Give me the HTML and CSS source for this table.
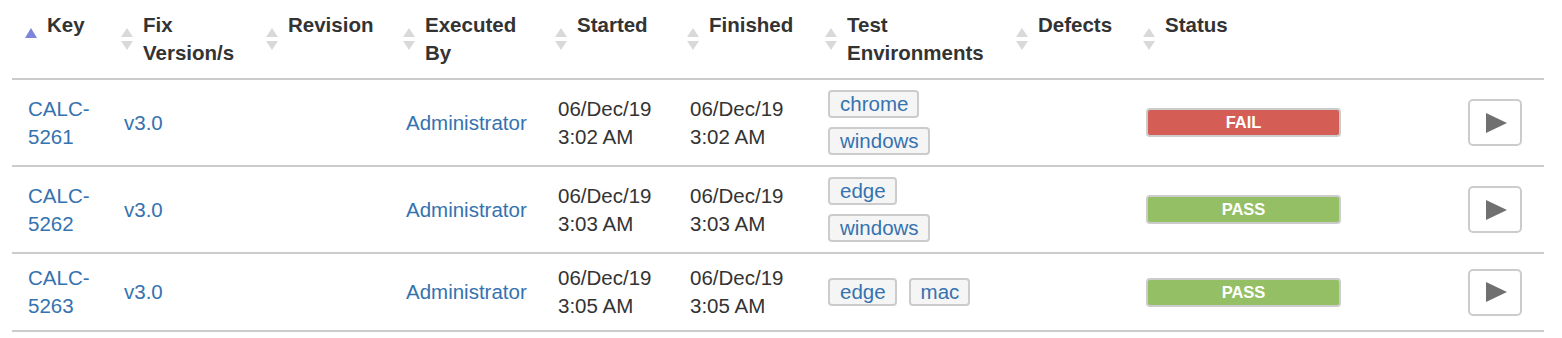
FILE: index.html
```html
<!DOCTYPE html>
<html>
<head>
<meta charset="utf-8">
<link rel="stylesheet" href="styles.css">
</head>
<body>
<table class="exec-table">
  <colgroup>
    <col class="c-key"><col class="c-fix"><col class="c-rev"><col class="c-exec"><col class="c-start"><col class="c-fin"><col class="c-env"><col class="c-def"><col class="c-status"><col class="c-act">
  </colgroup>
  <thead>
    <tr>
      <th><div class="th-inner"><svg class="sort" viewBox="0 0 14 24"><polygon class="asc" points="1,11 7,1 13,11"/></svg><span>Key</span></div></th>
      <th><div class="th-inner"><svg class="sort" viewBox="0 0 14 24"><polygon points="1,10 7,1 13,10"/><polygon points="1,14 7,23 13,14"/></svg><span>Fix Version/s</span></div></th>
      <th><div class="th-inner"><svg class="sort" viewBox="0 0 14 24"><polygon points="1,10 7,1 13,10"/><polygon points="1,14 7,23 13,14"/></svg><span>Revision</span></div></th>
      <th><div class="th-inner"><svg class="sort" viewBox="0 0 14 24"><polygon points="1,10 7,1 13,10"/><polygon points="1,14 7,23 13,14"/></svg><span>Executed By</span></div></th>
      <th><div class="th-inner"><svg class="sort" viewBox="0 0 14 24"><polygon points="1,10 7,1 13,10"/><polygon points="1,14 7,23 13,14"/></svg><span>Started</span></div></th>
      <th><div class="th-inner"><svg class="sort" viewBox="0 0 14 24"><polygon points="1,10 7,1 13,10"/><polygon points="1,14 7,23 13,14"/></svg><span>Finished</span></div></th>
      <th><div class="th-inner"><svg class="sort" viewBox="0 0 14 24"><polygon points="1,10 7,1 13,10"/><polygon points="1,14 7,23 13,14"/></svg><span>Test Environments</span></div></th>
      <th><div class="th-inner"><svg class="sort" viewBox="0 0 14 24"><polygon points="1,10 7,1 13,10"/><polygon points="1,14 7,23 13,14"/></svg><span>Defects</span></div></th>
      <th><div class="th-inner"><svg class="sort" viewBox="0 0 14 24"><polygon points="1,10 7,1 13,10"/><polygon points="1,14 7,23 13,14"/></svg><span>Status</span></div></th>
      <th></th>
    </tr>
  </thead>
  <tbody>
    <tr>
      <td><a class="link">CALC-5261</a></td>
      <td><a class="link">v3.0</a></td>
      <td></td>
      <td><a class="link">Administrator</a></td>
      <td>06/Dec/19<br>3:02 AM</td>
      <td>06/Dec/19<br>3:02 AM</td>
      <td><div class="tags"><span class="tag">chrome</span><span class="tag">windows</span></div></td>
      <td></td>
      <td><div class="status fail">FAIL</div></td>
      <td class="act"><button class="run"><svg viewBox="0 0 21 20"><polygon points="0,0 21,10 0,20"/></svg></button></td>
    </tr>
    <tr>
      <td><a class="link">CALC-5262</a></td>
      <td><a class="link">v3.0</a></td>
      <td></td>
      <td><a class="link">Administrator</a></td>
      <td>06/Dec/19<br>3:03 AM</td>
      <td>06/Dec/19<br>3:03 AM</td>
      <td><div class="tags"><span class="tag">edge</span><span class="tag">windows</span></div></td>
      <td></td>
      <td><div class="status pass">PASS</div></td>
      <td class="act"><button class="run"><svg viewBox="0 0 21 20"><polygon points="0,0 21,10 0,20"/></svg></button></td>
    </tr>
    <tr>
      <td><a class="link">CALC-5263</a></td>
      <td><a class="link">v3.0</a></td>
      <td></td>
      <td><a class="link">Administrator</a></td>
      <td>06/Dec/19<br>3:05 AM</td>
      <td>06/Dec/19<br>3:05 AM</td>
      <td><div class="tags"><span class="tag">edge</span><span class="tag">mac</span></div></td>
      <td></td>
      <td><div class="status pass">PASS</div></td>
      <td class="act"><button class="run"><svg viewBox="0 0 21 20"><polygon points="0,0 21,10 0,20"/></svg></button></td>
    </tr>
  </tbody>
</table>
</body>
</html>
```

FILE: styles.css
```css
html, body {
  margin: 0;
  padding: 0;
  background: #fff;
}
body {
  font-family: "Liberation Sans", Arial, Helvetica, sans-serif;
  font-size: 20.5px;
  line-height: 28px;
  color: #333;
}
.exec-table {
  margin-left: 12px;
  width: 1532px;
  table-layout: fixed;
  border-collapse: collapse;
  border-spacing: 0;
}
.c-key { width: 96px; }
.c-fix { width: 145px; }
.c-rev { width: 137px; }
.c-exec { width: 152px; }
.c-start { width: 132px; }
.c-fin { width: 138px; }
.c-env { width: 191px; }
.c-def { width: 127px; }
.c-status { width: 230px; }
.c-act { width: 184px; }

th {
  text-align: left;
  vertical-align: top;
  font-weight: bold;
  color: #333;
  padding: 11px 2px 11px 12px;
  border-bottom: 2px solid #ccc;
}
.th-inner {
  display: flex;
  min-height: 56px;
}
.sort {
  width: 14px;
  height: 24px;
  flex: none;
  align-self: center;
  margin-right: 9px;
  fill: #d9d9d9;
}
.sort .asc {
  fill: #7c84dc;
}
td {
  vertical-align: middle;
  padding: 10px 16px;
  border-bottom: 2px solid #ccc;
  color: #333;
}
.link {
  color: #3572b0;
  text-decoration: none;
}
.tags {
  display: flex;
  flex-wrap: wrap;
  gap: 9px 12px;
}
.tag {
  display: inline-block;
  line-height: 24px;
  padding: 0 9px 0 10px;
  color: #3572b0;
  background: #f5f5f5;
  border: 2px solid #ccc;
  border-radius: 4px;
}
.status {
  width: 195px;
  height: 29px;
  box-sizing: border-box;
  border: 2px solid #ccc;
  border-radius: 4px;
  color: #fff;
  font-weight: bold;
  font-size: 16.5px;
  line-height: 25px;
  text-align: center;
}
.status.fail { background: #d45d55; }
.status.pass { background: #95bf64; }
.act {
  text-align: right;
  padding-right: 22px;
}
.run {
  width: 54px;
  height: 47px;
  box-sizing: border-box;
  border: 2px solid #ccc;
  border-radius: 5px;
  background: #fff;
  padding: 0;
  display: inline-flex;
  align-items: center;
  justify-content: center;
  vertical-align: middle;
}
.run svg {
  width: 21px;
  height: 20px;
  fill: #707070;
  margin-left: 3px;
}
```
